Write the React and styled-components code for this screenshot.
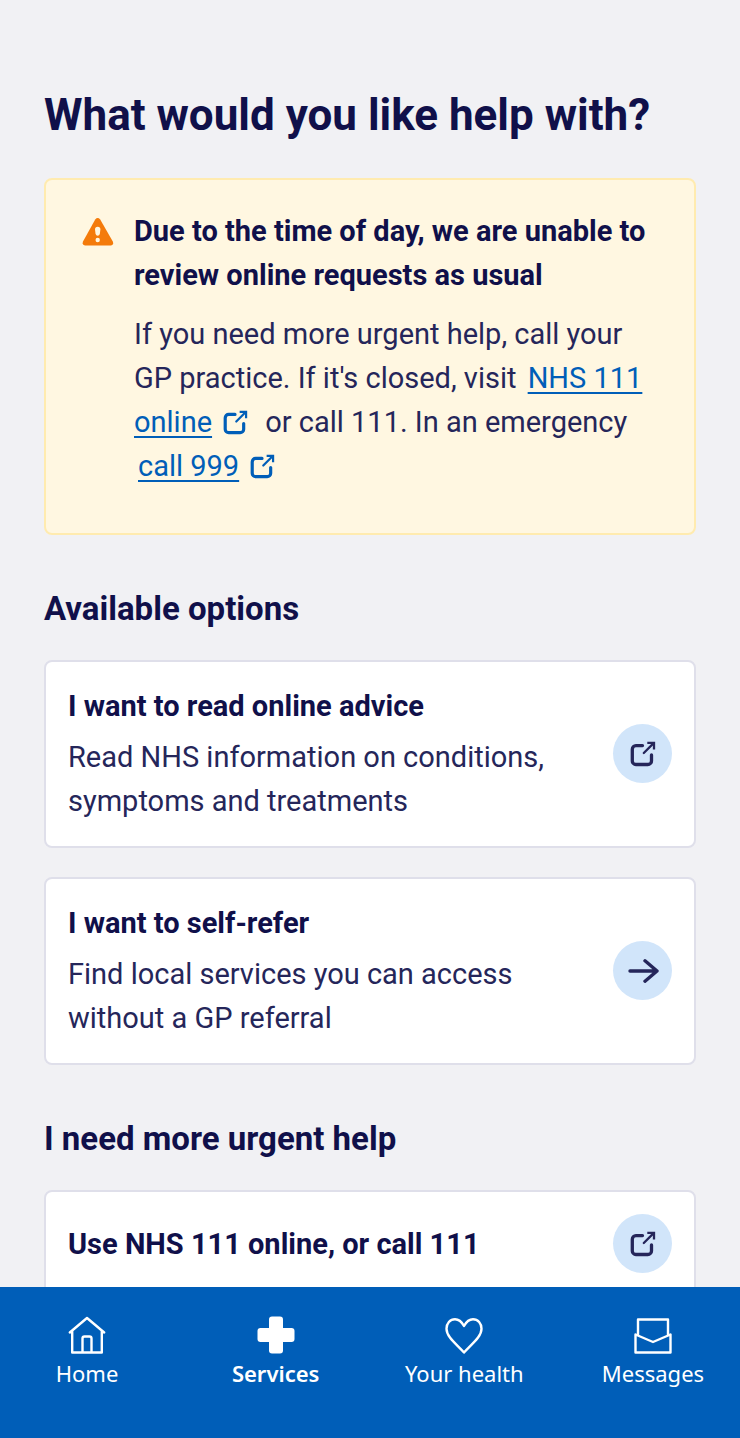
import React from 'react';
import styled, {createGlobalStyle} from 'styled-components';

const NAVY = '#10104a';
const TEXT = '#25265a';
const BLUE = '#005eb8';
const PAGE = '#f1f1f4';
const CREAM = '#fff7e1';
const WHITE = '#ffffff';

function App() {
  return (
    <Screen>
      <GlobalStyle />
      <Content>
        <Title>What would you like help with?</Title>
        <Alert>
          <WarningIcon />
          <div>
            <AlertTitle>
              Due to the time of day, we are unable to review online requests as
              usual
            </AlertTitle>
            <Text>
              If you need more urgent help, call your GP practice. If it's
              closed, visit <ExternalLink href="#111">NHS 111 online</ExternalLink>
              {' or call 111. In an emergency '}
              <ExternalLink href="#999">call 999</ExternalLink>
            </Text>
          </div>
        </Alert>

        <SectionTitle>Available options</SectionTitle>
        <Cards>
          <OptionCard
            title="I want to read online advice"
            text="Read NHS information on conditions, symptoms and treatments"
            icon={<OpenIcon size={26} />}
          />
          <OptionCard
            title="I want to self-refer"
            text="Find local services you can access without a GP referral"
            icon={<ArrowIcon />}
          />
        </Cards>

        <SectionTitle>I need more urgent help</SectionTitle>
        <Cards>
          <OptionCard
            title="Use NHS 111 online, or call 111"
            icon={<OpenIcon size={26} />}
          />
        </Cards>
      </Content>

      <Nav>
        <NavItem href="#home">
          <HomeIcon />
          Home
        </NavItem>
        <NavItem href="#services" $active aria-current="page">
          <ServicesIcon />
          Services
        </NavItem>
        <NavItem href="#health">
          <HeartIcon />
          Your health
        </NavItem>
        <NavItem href="#messages">
          <MessagesIcon />
          Messages
        </NavItem>
      </Nav>
    </Screen>
  );
}

function ExternalLink(props) {
  return (
    <Link href={props.href}>
      <span>{props.children}</span>
      <OpenIcon size={25} />
    </Link>
  );
}

function OptionCard(props) {
  return (
    <Card href="#option">
      <CardBody>
        <CardTitle>{props.title}</CardTitle>
        {props.text ? <Text as="span">{props.text}</Text> : ''}
      </CardBody>
      <Circle>{props.icon}</Circle>
    </Card>
  );
}

function OpenIcon({size}) {
  return (
    <svg width={size} height={size} viewBox="0 0 26 26" fill="none" stroke="currentColor" strokeLinecap="round" aria-hidden="true">
      <path d="M12.5 4.6H5.9a3.6 3.6 0 0 0-3.6 3.6v11.7a3.6 3.6 0 0 0 3.6 3.6h12a3.6 3.6 0 0 0 3.6-3.6V14" strokeWidth="3.3" />
      <path d="M13.8 12L23.4 2.4" strokeWidth="2.3" />
      <path d="M17.3 1.9H24V8.6" strokeWidth="2.3" strokeLinecap="butt" />
    </svg>
  );
}

function ArrowIcon() {
  return (
    <svg width="32" height="26" viewBox="0 0 32 26" fill="none" stroke="currentColor" strokeWidth="3.4" strokeLinecap="round" strokeLinejoin="round" aria-hidden="true">
      <path d="M3 13H30M18 2.8L30 13L18 23.2" />
    </svg>
  );
}

function WarningIcon() {
  return (
    <AlertSvg width="32" height="30" viewBox="0 0 32 30" aria-hidden="true">
      <path d="M13.2 2.4Q15.700 -.4 18.200 2.400L30.800 24.500Q32 28.200 29 28.400H3Q-.2 28.200 1 24.500Z" fill="#f47b0b" />
      <path d="M13 12.400Q13 9.800 15.700 9.800Q18.400 9.800 18.400 12.400L17.800 17Q17.400 18.800 15.700 18.800Q14 18.800 13.600 17Z" fill={CREAM} />
      <circle cx="15.7" cy="23" r="2.2" fill={CREAM} />
    </AlertSvg>
  );
}

function HomeIcon() {
  return (
    <svg width="40" height="40" viewBox="0 0 40 40" fill="none" stroke="currentColor" strokeWidth="2.4" strokeLinecap="round" strokeLinejoin="round" aria-hidden="true">
      <path d="M2.8 17.5L20 3L37.2 17.5M5.2 16V37.5H34.8V16M15.5 37V23.5Q15.5 21.5 17.5 21.5H22.5Q24.5 21.5 24.5 23.5V37" />
    </svg>
  );
}

function ServicesIcon() {
  return (
    <svg width="40" height="40" viewBox="0 0 40 40" fill="currentColor" aria-hidden="true">
      <rect x="13" y="1.5" width="14" height="37" rx="3" />
      <rect x="1.5" y="13" width="37" height="14" rx="3" />
    </svg>
  );
}

function HeartIcon() {
  return (
    <svg width="40" height="40" viewBox="0 0 40 40" fill="none" stroke="currentColor" strokeWidth="2.4" strokeLinecap="round" strokeLinejoin="round" aria-hidden="true">
      <path d="M20 11C17.5 6.5 14.5 4.3 11 4.3C6 4.3 2.5 8.4 2.5 13.7C2.5 22 12.5 29 20 37.5C27.5 29 37.5 22 37.5 13.7C37.5 8.4 34 4.3 29 4.3C25.5 4.3 22.5 6.5 20 11Z" />
    </svg>
  );
}

function MessagesIcon() {
  return (
    <svg width="40" height="40" viewBox="0 0 40 40" fill="none" stroke="currentColor" strokeWidth="2.4" strokeLinecap="round" strokeLinejoin="round" aria-hidden="true">
      <path d="M5 20V4.5H35V20M2.5 19.5L20 27L37.5 19.5V37.5H2.5Z" />
    </svg>
  );
}

const GlobalStyle = createGlobalStyle`
  * {
    box-sizing: border-box;
  }

  body {
    margin: 0;
    background: ${PAGE};
    font-family: Roboto, 'Liberation Sans', sans-serif;
  }
`;

const Screen = styled.div`
  display: flex;
  flex-direction: column;
  height: 100vh;
  color: ${NAVY};
`;

const Content = styled.main`
  flex: 1;
  min-height: 0;
  overflow: hidden;
  padding: 89px 44px 0;
`;

const Title = styled.h1`
  margin: 0 0 37px;
  font-size: 44px;
  font-weight: 700;
  line-height: 52px;
`;

const Alert = styled.section`
  display: flex;
  align-items: flex-start;
  gap: 20px;
  padding: 29px 36px 45px;
  border: 2px solid #ffebaf;
  border-radius: 8px;
  background: ${CREAM};
`;

const AlertSvg = styled.svg`
  flex: none;
  margin-top: 8px;
`;

const AlertTitle = styled.h2`
  margin: 0 0 15px;
  font-size: 29px;
  font-weight: 700;
  line-height: 44px;
`;

const Text = styled.p`
  margin: 0;
  color: ${TEXT};
  font-size: 29px;
  line-height: 44px;
`;

const Link = styled.a`
  margin: 0 4px;
  color: ${BLUE};
  text-decoration: none;

  span {
    text-decoration: underline;
    text-decoration-thickness: 2px;
    text-underline-offset: 4px;
  }

  svg {
    margin: 0 6px 0 11px;
    vertical-align: -3px;
  }
`;

const SectionTitle = styled.h2`
  margin: 52px 0 29px;
  font-size: 33px;
  font-weight: 700;
  line-height: 44px;
`;

const Cards = styled.div`
  display: grid;
  gap: 29px;
`;

const Card = styled.a`
  display: flex;
  align-items: center;
  justify-content: space-between;
  gap: 24px;
  min-height: 106px;
  padding: 22px 22px 23px;
  border: 2px solid #dfdfea;
  border-radius: 8px;
  background: ${WHITE};
  color: ${NAVY};
  text-decoration: none;
`;

const CardBody = styled.span`
  display: grid;
  gap: 7px;
`;

const CardTitle = styled.span`
  font-size: 29px;
  font-weight: 700;
  line-height: 44px;
`;

const Circle = styled.span`
  display: flex;
  flex: none;
  align-items: center;
  justify-content: center;
  width: 59px;
  height: 59px;
  border-radius: 50%;
  background: #d1e5fa;
  color: ${TEXT};
`;

const Nav = styled.nav`
  display: flex;
  flex: none;
  justify-content: space-between;
  padding: 28px 22px 49px;
  background: ${BLUE};
`;

const NavItem = styled.a`
  display: flex;
  flex-direction: column;
  align-items: center;
  gap: 2px;
  width: 130px;
  color: ${WHITE};
  font-family: 'Noto Sans', 'Open Sans', sans-serif;
  font-size: 22px;
  font-weight: ${(props) => (props.$active ? 600 : 400)};
  line-height: 32px;
  text-decoration: none;
  white-space: nowrap;
`;

export default App;
